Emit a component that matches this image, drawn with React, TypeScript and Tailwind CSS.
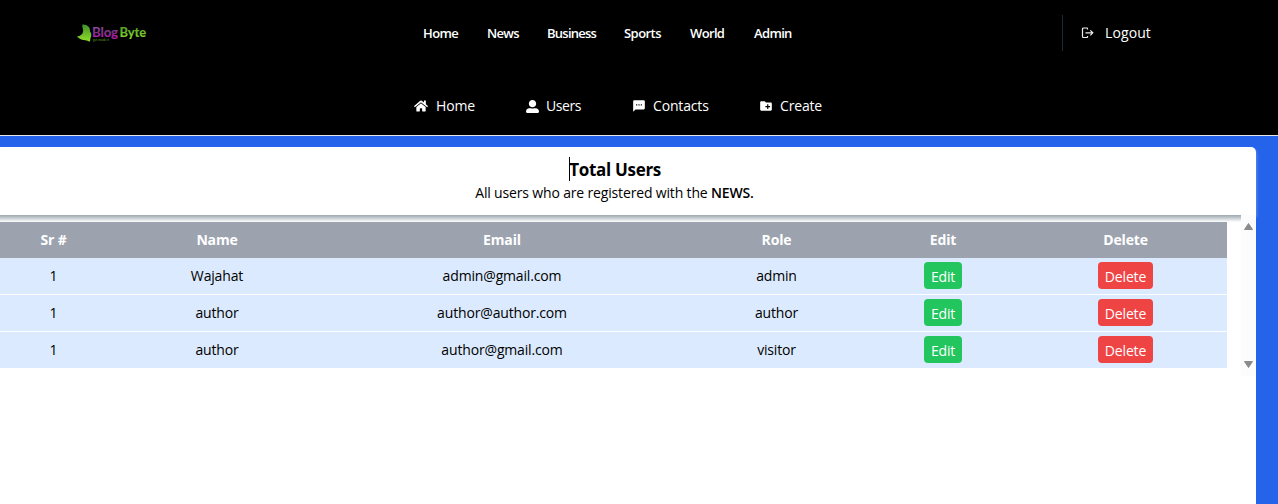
import React from "react";
import { FaHome, FaUserAlt } from "react-icons/fa";
import { MdSms, MdCreateNewFolder } from "react-icons/md";

const navItems = [
  { label: "Home", width: "w-[64px]", tracking: "tracking-[-0.6px]" },
  { label: "News", width: "w-[60px]", tracking: "tracking-[-0.7px]" },
  { label: "Business", width: "w-[77px]", tracking: "tracking-[-0.75px]" },
  { label: "Sports", width: "w-[66px]", tracking: "tracking-[-0.55px]" },
  { label: "World", width: "w-[64px]", tracking: "tracking-[-0.65px]" },
  { label: "Admin", width: "w-[60px]", tracking: "tracking-[-0.65px]" },
];

const users = [
  { name: "Wajahat", email: "admin@gmail.com", role: "admin" },
  { name: "author", email: "author@author.com", role: "author" },
  { name: "author", email: "author@gmail.com", role: "visitor" },
];

const columns = "grid grid-cols-[120px_194px_376px_173px_160px_205px] items-center text-center";

function Logo() {
  return (
    <svg className="h-5 w-[72px]" viewBox="0 0 72 20" aria-label="Blog Byte">
      <defs>
        <linearGradient id="leaf" x1="0" y1="0" x2="0" y2="1">
          <stop offset="0" stopColor="#3f8f28" />
          <stop offset="1" stopColor="#93e02a" />
        </linearGradient>
        <linearGradient id="plum" x1="0" y1="0" x2="0" y2="1">
          <stop offset="0.2" stopColor="#8a4a9c" />
          <stop offset="0.5" stopColor="#75307f" />
          <stop offset="0.8" stopColor="#b01fac" />
        </linearGradient>
      </defs>
      <path d="M6.500 1.500C11 1 14.500 4 14 8.500C15.800 10.500 15.500 13 14.500 15C14 16.500 14.800 17.500 13.500 18.800C10 16 5.500 18.500 1 13.500C4 13 6.500 11.500 7 9C8 6.500 5.500 4 6.500 1.500Z" fill="url(#leaf)" />
      <text x="16" y="14" fontSize="13.500" fontWeight="900" fontFamily="Lato, sans-serif" fill="url(#plum)" textLength="26" lengthAdjust="spacingAndGlyphs">Blog</text>
      <text x="43.500" y="14" fontSize="13.500" fontWeight="900" fontFamily="Lato, sans-serif" fill="url(#leaf)" textLength="26.500" lengthAdjust="spacingAndGlyphs">Byte</text>
      <text x="17" y="18" fontSize="3" fontFamily="Open Sans, sans-serif" fill="#6fae2b" textLength="16">get inside it</text>
    </svg>
  );
}

function LogoutIcon() {
  return (
    <svg width="14" height="14" viewBox="0 0 14 14" fill="none" stroke="#ededed" strokeWidth="1.200">
      <path d="M6.500 3.500V2.500Q6.500 2 6 2H2.500Q1.500 2 1.500 3V10.500Q1.500 11.500 2.500 11.500H6Q6.500 11.500 6.500 11V10" />
      <path d="M4.500 6.800H11.500M9.300 4.300L11.800 6.800L9.300 9.300" />
    </svg>
  );
}

export default function App() {
  return (
    <div className="flex h-[504px] w-[1278px] flex-col overflow-hidden bg-[#2563eb] font-['Open_Sans',sans-serif] text-[14px] tracking-[-0.16px] text-black">
      <header className="h-[136px] shrink-0 border-b border-gray-200 bg-black text-white">
        <div className="flex h-[66px] items-center">
          <div className="w-[423px] pl-[76px]"><Logo /></div>
          <nav className="flex w-[639px] pt-px text-[13px] font-semibold">
            {navItems.map((item) => (
              <a key={item.label} className={`${item.width} ${item.tracking}`}>{item.label}</a>
            ))}
          </nav>
          <div className="flex h-9 items-center border-l border-[#1f2937] pl-[18px]">
            <LogoutIcon />
            <span className="ml-[10px] pb-px tracking-[0.1px]">Logout</span>
          </div>
        </div>
        <nav className="flex h-[80px] items-center pl-[414px]">
          <a className="flex w-[112px] items-center gap-2"><FaHome size={14} /><span className="pb-px">Home</span></a>
          <a className="flex w-[106px] items-center gap-[7px]"><FaUserAlt size={13} /><span className="pb-px tracking-[-0.4px]">Users</span></a>
          <a className="flex w-[127px] items-center gap-[7px]"><MdSms size={14} /><span className="pb-px">Contacts</span></a>
          <a className="flex items-center gap-[7px]"><MdCreateNewFolder size={14} /><span className="pb-px">Create</span></a>
        </nav>
      </header>
      <main className="mt-[11px] w-[1256px] flex-1 rounded-tr-[5px] bg-white">
        <section className="h-[68px] rounded-tr-[5px] pt-[10px] text-center shadow-[1px_2px_3px_#ffffff40]">
          <h1 className="mr-[595px] ml-auto w-fit border-l border-black pt-px text-[17px] leading-[23px] font-bold tracking-[-0.3px]"><span className="-ml-px">Total Users</span></h1>
          <p className="mr-[27px] leading-6">All users who are registered with the <span className="font-semibold">NEWS.</span></p>
        </section>
        <section className="flex h-[161px] bg-white">
          <div className="w-[1241px]">
            <div className="h-[7px] bg-linear-to-b from-[#9ca8b1] to-white" />
            <div className={`${columns} h-9 w-[1227px] bg-[#9ca3af] pb-px font-bold text-white`}>
              <span className="pr-[13px]">Sr #</span><span>Name</span><span>Email</span><span>Role</span><span>Edit</span><span>Delete</span>
            </div>
            {users.map((user) => (
              <div key={user.email} className={`${columns} h-[37px] w-[1227px] border-b border-white bg-[#dbeafe] pb-px`}>
                <span className="pr-[13px]">1</span>
                <span>{user.name}</span>
                <span>{user.email}</span>
                <span>{user.role}</span>
                <button className="h-[27px] w-[38px] justify-self-center rounded bg-[#22c55e] pt-px text-white">Edit</button>
                <button className="h-[27px] w-[55px] justify-self-center rounded bg-[#ef4444] pt-px text-white">Delete</button>
              </div>
            ))}
          </div>
          <div className="flex w-[15px] flex-col items-center justify-between bg-[#fcfcfc] py-[7px]">
            <svg width="11" height="9" viewBox="0 0 11 9"><path d="M5.500 1.500L9.500 7.500H1.500Z" fill="#8b8b8b" stroke="#8b8b8b" strokeLinejoin="round" /></svg>
            <svg width="11" height="9" viewBox="0 0 11 9"><path d="M5.500 7.500L1.500 1.500H9.500Z" fill="#8b8b8b" stroke="#8b8b8b" strokeLinejoin="round" /></svg>
          </div>
        </section>
      </main>
    </div>
  );
}
